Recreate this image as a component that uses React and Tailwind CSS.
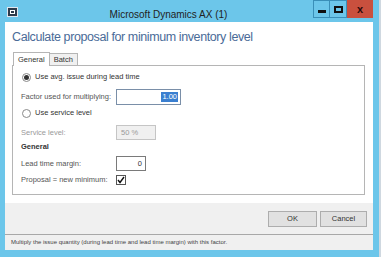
import React from 'react';

const font = { fontFamily: '"Liberation Sans", Arial, sans-serif' };

function Radio({ checked }) {
	return (
		<span className="w-[9px] h-[9px] rounded-full border border-[#8a8a8a] bg-white flex items-center justify-center shrink-0">
			{checked && <span className="w-[5px] h-[5px] rounded-full bg-[#333]" />}
		</span>
	);
}

function Field({ label, children, className = '', muted }) {
	return (
		<div className={`flex items-center ${className}`}>
			<span className={`w-[95px] shrink-0 whitespace-nowrap text-[7.5px] ${muted ? 'text-[#9a9a9a]' : 'text-[#555]'}`}>{label}</span>
			{children}
		</div>
	);
}

export default function App() {
	return (
		<div className="w-[381px] h-[257px] flex bg-[#cfd8e0] overflow-hidden" style={font}>
			<div className="w-[379px] h-full bg-[#6cc6ea] flex flex-col">
				{/* title bar */}
				<div className="h-[22px] flex items-start relative">
					<div className="mt-[7px] ml-[7px] w-[11px] h-[10px] bg-[#2d3a4a] border border-[#dfe6ee] flex items-center justify-center">
						<span className="w-[5px] h-[4px] border border-white" />
					</div>
					<div className="flex-1 text-center text-[10px] text-[#222] mt-[7px] pl-[6px]">Microsoft Dynamics AX (1)</div>
					<div className="flex h-[18px] mr-[6px]">
						<div className="w-[17px] h-full border border-[#3a8fb8] flex items-center justify-center">
							<span className="w-[8px] h-[3px] bg-[#111] mt-[5px]" />
						</div>
						<div className="w-[17px] h-full border-y border-r border-[#3a8fb8] flex items-center justify-center">
							<span className="w-[9px] h-[7px] border-2 border-[#111]" />
						</div>
						<div className="w-[26px] h-full bg-[#c9503e] flex items-center justify-center text-[11px] font-bold text-[#2a0a0a]">x</div>
					</div>
				</div>

				{/* client area */}
				<div className="mx-[5px] mr-[6px] flex-1 flex flex-col bg-white">
					<div className="px-[7px] pt-[6px] text-[12.5px] tracking-[-0.4px] leading-[18px] text-[#4a6b98]">Calculate proposal for minimum inventory level</div>
					<div className="flex items-end ml-[8px] mt-[5px] h-[14px]">
						<div className="h-[14px] px-[4px] border-x border-t border-[#b5b5b5] bg-white text-[7.5px] text-[#333] flex items-center relative z-10 -mb-px">General</div>
						<div className="h-[12px] px-[4px] border-r border-t border-[#b5b5b5] bg-[#f0f0f0] text-[7.5px] text-[#333] flex items-center">Batch</div>
					</div>
					<div className="mx-[7px] mr-[8px] h-[130px] border border-[#b5b5b5] px-[8px] flex flex-col">
						<div className="flex items-center gap-[4px] mt-[4px] h-[14px] pl-[1px] text-[7.5px] text-[#333]">
							<Radio checked />
							Use avg. issue during lead time
						</div>
						<Field label="Factor used for multiplying:" className="mt-[5px] h-[16px]">
							<div className="w-[65px] h-[16px] border border-[#7a8fa8] flex items-center justify-end pr-[2px]">
								<span className="bg-[#3a7fd0] text-white text-[7.5px] leading-[10px] px-[1px]">1.00</span>
							</div>
						</Field>
						<div className="flex items-center gap-[4px] mt-[1px] h-[14px] pl-[1px] text-[7.5px] text-[#333]">
							<Radio />
							Use service level
						</div>
						<Field label="Service level:" muted className="mt-[5px] h-[15px]">
							<div className="w-[40px] h-[15px] border border-[#c5c5c5] bg-[#f0f0f0] flex items-center pl-[4px] text-[7.5px] text-[#9a9a9a]">50 %</div>
						</Field>
						<div className="h-[12px] mt-[1px] flex items-center text-[7.5px] font-bold text-[#333]">General</div>
						<Field label="Lead time margin:" className="mt-[3px] h-[15px]">
							<div className="w-[30px] h-[15px] border border-[#7a7a7a] flex items-center justify-end pr-[3px] text-[7.5px] text-[#333]">0</div>
						</Field>
						<Field label="Proposal = new minimum:" className="mt-[2px] h-[14px]">
							<div className="w-[10px] h-[10px] border border-[#555] flex items-center justify-center">
								<svg width="8" height="8" viewBox="0 0 8 8">
									<path d="M1 4 L3 6.5 L7 1" fill="none" stroke="#111" strokeWidth="1.4" />
								</svg>
							</div>
						</Field>
					</div>
					<div className="h-[8px]" />
					<div className="flex-1 bg-[#f0f0f0] flex justify-end items-start gap-[3px] pt-[8px] pr-[6px]">
						<button className="w-[49px] h-[16px] bg-[#e1e1e1] border border-[#adadad] text-[7.5px] text-[#333]">OK</button>
						<button className="w-[47px] h-[16px] bg-[#e1e1e1] border border-[#adadad] text-[7.5px] text-[#333]">Cancel</button>
					</div>
					<div className="h-[16px] border-t border-[#a8a8a8] bg-[#f0f0f0] flex items-center pl-[6px] text-[6px] text-[#444] whitespace-nowrap overflow-hidden">
						Multiply the issue quantity (during lead time and lead time margin) with this factor.
					</div>
				</div>
				<div className="h-[7px]" />
			</div>
		</div>
	);
}
